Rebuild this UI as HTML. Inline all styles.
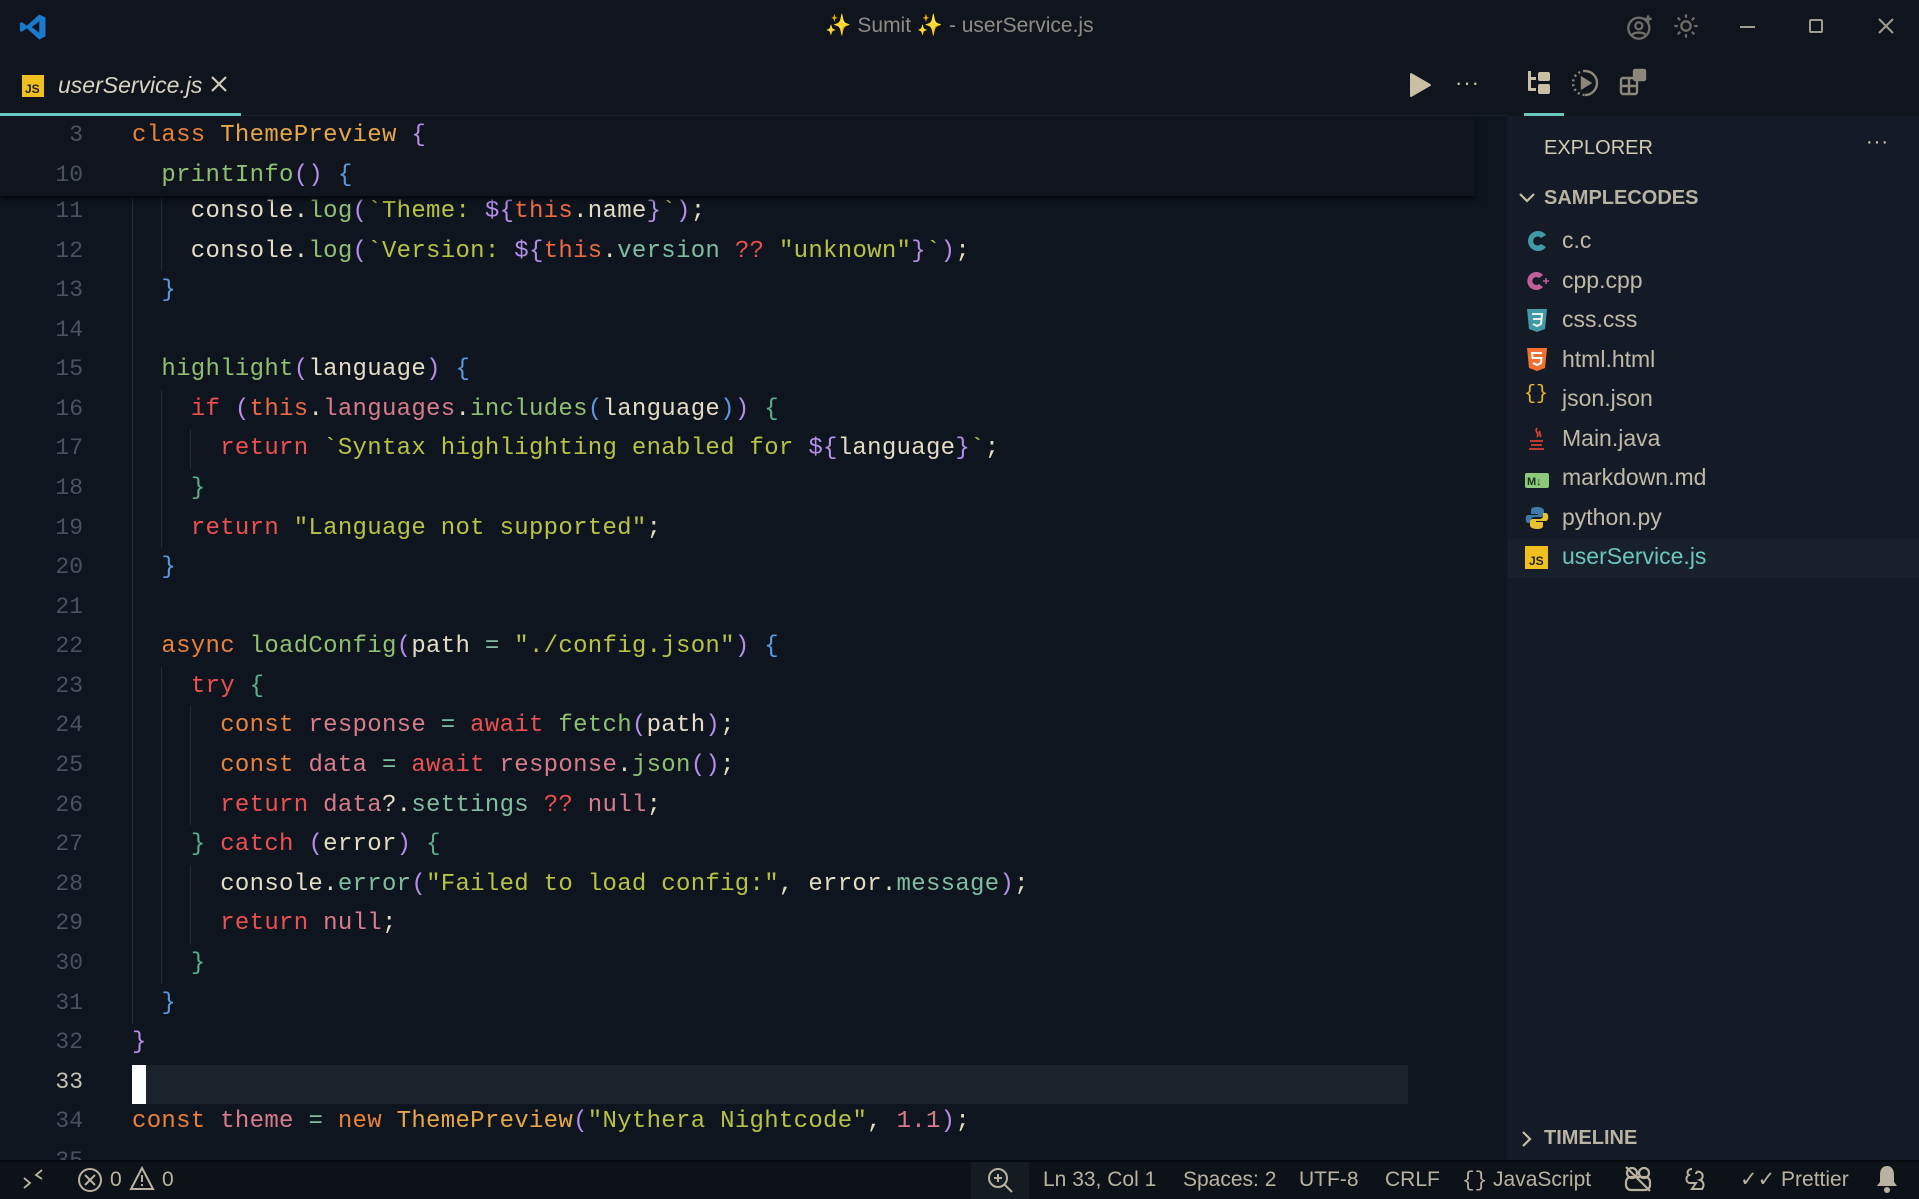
<!DOCTYPE html>
<html><head><meta charset="utf-8">
<style>
*{margin:0;padding:0;box-sizing:border-box}
body{width:1919px;height:1199px;background:#0f151f;overflow:hidden;position:relative;font-family:"Liberation Sans","DejaVu Sans",sans-serif;color:#c8bfa4}
.abs{position:absolute}
#title{left:0;top:0;width:1919px;height:55px;background:#0f141d}
#tabs{left:0;top:55px;width:1507px;height:61px;background:#0f141d;border-bottom:1px solid #1a222c}
#editor{left:0;top:116px;width:1507px;height:1044px;background:#0f151f;overflow:hidden}
#side{left:1507px;top:55px;width:412px;height:1105px;background:#141b26}
#sidetabs{left:1507px;top:55px;width:412px;height:61px;background:#0f141d}
#status{left:0;top:1160px;width:1919px;height:39px;background:#0d1219;border-top:2px solid #070a0e}
.code{font-family:"Liberation Mono","DejaVu Sans Mono",monospace;font-size:24px;letter-spacing:0.3px;white-space:pre;line-height:39.6px;position:absolute;left:132px;color:#e4dcc4}
.ln{font-family:"Liberation Mono",monospace;font-size:23px;position:absolute;left:0;width:83px;text-align:right;line-height:39.6px;color:#4a5260}
.k{color:#e8823a}.r{color:#ec5050}.f{color:#8fc070}.t{color:#e6a847}.s{color:#b8c244}.v{color:#d87c8c}.o{color:#7fbf9f}.pu{color:#b48ee8}.bl{color:#5a9ae0}.gr{color:#5ab08a}.w{color:#e4dcc4}.th{color:#ee6a44}.n{color:#d87c8c}
.guide{position:absolute;width:1px;background:#252c38}
.file{position:absolute;left:1562px;font-size:23px;color:#c0b9a8}
.ico{position:absolute;left:1524px;width:26px;height:26px}
.st{position:absolute;top:1166px;font-size:21px;color:#b9b2a0;line-height:28px}
</style></head><body>
<div id="title" class="abs"></div>
<svg class="abs" style="left:18px;top:12px" width="30" height="30" viewBox="0 0 24 24"><path d="M17 2 L22 4.5 V19.5 L17 22 L7 13 L3 16 L1.5 15 V9 L3 8 L7 11 Z M17 7.5 L11 12 L17 16.5 Z" fill="#1a7acc"/></svg>
<div class="abs" style="left:0;top:14px;width:1919px;text-align:center;font-size:21px;color:#8f8c83"><span style="color:#b8925a">✨</span> Sumit <span style="color:#b8925a">✨</span> - userService.js</div>
<svg class="abs" style="left:1626px;top:13px" width="28" height="28" viewBox="0 0 24 24" fill="none" stroke="#6e6c66" stroke-width="2"><circle cx="11" cy="13" r="9"/><circle cx="11" cy="11" r="3"/><path d="M5 19c2-3 10-3 12 0"/><path d="M19 2v6M16 5h6" /></svg>
<svg class="abs" style="left:1672px;top:12px" width="28" height="28" viewBox="0 0 24 24" fill="none" stroke="#6e6c66" stroke-width="2"><circle cx="12" cy="12" r="4"/><path d="M12 2v3M12 19v3M2 12h3M19 12h3M4.9 4.9l2.1 2.1M17 17l2.1 2.1M4.9 19.1L7 17M17 7l2.1-2.1"/></svg>
<div class="abs" style="left:1740px;top:26px;width:15px;height:2px;background:#a09c92"></div>
<div class="abs" style="left:1809px;top:19px;width:14px;height:14px;border:2px solid #a09c92;border-radius:2px"></div>
<svg class="abs" style="left:1877px;top:17px" width="18" height="18" viewBox="0 0 18 18" stroke="#a09c92" stroke-width="2"><path d="M2 2L16 16M16 2L2 16"/></svg>

<div id="tabs" class="abs"></div>
<div class="abs" style="left:0;top:113px;width:241px;height:3px;background:#6cc6c0"></div>
<div class="abs" style="left:22px;top:75px;width:22px;height:22px;background:#f0c020;font-size:12px;color:#222;font-weight:bold;padding:7px 0 0 3px;line-height:14px">JS</div>
<div class="abs" style="left:58px;top:72px;font-size:23px;font-style:italic;color:#d8d2c2">userService.js</div>
<svg class="abs" style="left:210px;top:75px" width="18" height="18" viewBox="0 0 18 18" stroke="#d0cab8" stroke-width="2.2"><path d="M2 2L16 16M16 2L2 16"/></svg>
<svg class="abs" style="left:1408px;top:72px" width="24" height="26" viewBox="0 0 24 26"><path d="M3 2 L22 13 L3 24 Z" fill="#c8bfa4" stroke="#c8bfa4" stroke-linejoin="round" stroke-width="2"/></svg>
<div class="abs" style="left:1455px;top:70px;font-size:22px;color:#c8bfa4;letter-spacing:1px">···</div>

<div id="editor" class="abs">
<div class="abs" style="left:0;top:0;width:1475px;height:80px;background:#0f141d;box-shadow:0 3px 5px #05080c;z-index:3">
<div class="ln" style="top:0">3</div><div class="code" style="top:0"><span class="k">class</span> <span class="t">ThemePreview</span> <span class="pu">{</span></div>
<div class="ln" style="top:40px">10</div><div class="code" style="top:40px">  <span class="f">printInfo</span><span class="pu">()</span> <span class="bl">{</span></div>
</div>
<div class="guide" style="left:132px;top:80px;height:828px"></div>
<div class="guide" style="left:161px;top:80px;height:75px"></div>
<div class="guide" style="left:161px;top:274px;height:158px"></div>
<div class="guide" style="left:161px;top:551px;height:317px"></div>
<div class="guide" style="left:190px;top:313px;height:40px"></div>
<div class="guide" style="left:190px;top:590px;height:119px"></div>
<div class="guide" style="left:190px;top:749px;height:79px"></div>
<div class="abs" style="left:132px;top:949px;width:1276px;height:39px;background:#1b222c"></div>
<div class="abs" style="left:132px;top:949px;width:14px;height:39px;background:#ffffff"></div>
<div class="ln" style="top:76px">11</div><div class="code" style="top:76px">    console<span class="w">.</span><span class="f">log</span><span class="pu">(</span><span class="s">`Theme: </span><span class="pu">${</span><span class="th">this</span>.name<span class="pu">}</span><span class="s">`</span><span class="pu">)</span>;</div>
<div class="ln" style="top:116px">12</div><div class="code" style="top:116px">    console.<span class="f">log</span><span class="pu">(</span><span class="s">`Version: </span><span class="pu">${</span><span class="th">this</span>.<span class="o">version</span> <span class="r">??</span> <span class="s">"unknown"</span><span class="pu">}</span><span class="s">`</span><span class="pu">)</span>;</div>
<div class="ln" style="top:155px">13</div><div class="code" style="top:155px">  <span class="bl">}</span></div>
<div class="ln" style="top:195px">14</div>
<div class="ln" style="top:234px">15</div><div class="code" style="top:234px">  <span class="f">highlight</span><span class="pu">(</span>language<span class="pu">)</span> <span class="bl">{</span></div>
<div class="ln" style="top:274px">16</div><div class="code" style="top:274px">    <span class="r">if</span> <span class="pu">(</span><span class="th">this</span>.<span class="v">languages</span>.<span class="f">includes</span><span class="bl">(</span>language<span class="bl">)</span><span class="pu">)</span> <span class="gr">{</span></div>
<div class="ln" style="top:313px">17</div><div class="code" style="top:313px">      <span class="r">return</span> <span class="s">`Syntax highlighting enabled for </span><span class="pu">${</span>language<span class="pu">}</span><span class="s">`</span>;</div>
<div class="ln" style="top:353px">18</div><div class="code" style="top:353px">    <span class="gr">}</span></div>
<div class="ln" style="top:393px">19</div><div class="code" style="top:393px">    <span class="r">return</span> <span class="s">"Language not supported"</span>;</div>
<div class="ln" style="top:432px">20</div><div class="code" style="top:432px">  <span class="bl">}</span></div>
<div class="ln" style="top:472px">21</div>
<div class="ln" style="top:511px">22</div><div class="code" style="top:511px">  <span class="k">async</span> <span class="f">loadConfig</span><span class="pu">(</span>path <span class="o">=</span> <span class="s">"./config.json"</span><span class="pu">)</span> <span class="bl">{</span></div>
<div class="ln" style="top:551px">23</div><div class="code" style="top:551px">    <span class="r">try</span> <span class="gr">{</span></div>
<div class="ln" style="top:590px">24</div><div class="code" style="top:590px">      <span class="k">const</span> <span class="v">response</span> <span class="o">=</span> <span class="r">await</span> <span class="f">fetch</span><span class="pu">(</span>path<span class="pu">)</span>;</div>
<div class="ln" style="top:630px">25</div><div class="code" style="top:630px">      <span class="k">const</span> <span class="v">data</span> <span class="o">=</span> <span class="r">await</span> <span class="v">response</span>.<span class="f">json</span><span class="pu">()</span>;</div>
<div class="ln" style="top:670px">26</div><div class="code" style="top:670px">      <span class="r">return</span> <span class="v">data</span>?.<span class="o">settings</span> <span class="r">??</span> <span class="n">null</span>;</div>
<div class="ln" style="top:709px">27</div><div class="code" style="top:709px">    <span class="gr">}</span> <span class="r">catch</span> <span class="pu">(</span>error<span class="pu">)</span> <span class="gr">{</span></div>
<div class="ln" style="top:749px">28</div><div class="code" style="top:749px">      console.<span class="o">error</span><span class="pu">(</span><span class="s">"Failed to load config:"</span>, error.<span class="o">message</span><span class="pu">)</span>;</div>
<div class="ln" style="top:788px">29</div><div class="code" style="top:788px">      <span class="r">return</span> <span class="n">null</span>;</div>
<div class="ln" style="top:828px">30</div><div class="code" style="top:828px">    <span class="gr">}</span></div>
<div class="ln" style="top:868px">31</div><div class="code" style="top:868px">  <span class="bl">}</span></div>
<div class="ln" style="top:907px">32</div><div class="code" style="top:907px"><span class="pu">}</span></div>
<div class="ln" style="top:947px;color:#c8c2b2">33</div>
<div class="ln" style="top:986px">34</div><div class="code" style="top:986px"><span class="k">const</span> <span class="v">theme</span> <span class="o">=</span> <span class="k">new</span> <span class="t">ThemePreview</span><span class="pu">(</span><span class="s">"Nythera Nightcode"</span>, <span class="n">1.1</span><span class="pu">)</span>;</div>
<div class="ln" style="top:1026px">35</div>
</div>

<div id="side" class="abs"></div>
<div id="sidetabs" class="abs"></div>
<svg class="abs" style="left:1525px;top:69px" width="28" height="28" viewBox="0 0 28 28" fill="#c8bfa4"><path d="M3 2h3v6h5v3H6v8h5v3H4a1 1 0 0 1-1-1z"/><rect x="13" y="3" width="12" height="9" rx="2"/><rect x="13" y="15" width="12" height="10" rx="2"/></svg>
<svg class="abs" style="left:1571px;top:69px" width="28" height="28" viewBox="0 0 28 28" fill="none" stroke="#8c877a" stroke-width="2.4"><path d="M14 2a12 12 0 1 1 0 24" /><path d="M14 2a12 12 0 0 0 0 24" stroke-dasharray="2 3"/><path d="M11 9l8 5-8 5z" fill="#8c877a"/></svg>
<svg class="abs" style="left:1619px;top:68px" width="28" height="28" viewBox="0 0 28 28" fill="none" stroke="#8c877a" stroke-width="2.4"><rect x="2" y="10" width="16" height="16" rx="2"/><path d="M10 10v16M2 18h16"/><rect x="15" y="2" width="11" height="10" rx="1" fill="#8c877a"/></svg>
<div class="abs" style="left:1524px;top:113px;width:40px;height:3px;background:#6cc6c0"></div>
<div class="abs" style="left:1544px;top:137px;font-size:20px;color:#d2cab4">EXPLORER</div>
<div class="abs" style="left:1866px;top:131px;font-size:20px;color:#d2cab4;letter-spacing:1px">···</div>
<svg class="abs" style="left:1518px;top:191px" width="18" height="14" viewBox="0 0 18 14" fill="none" stroke="#c8bfa4" stroke-width="2.2"><path d="M2 3l7 7 7-7"/></svg>
<div class="abs" style="left:1544px;top:187px;font-size:20px;font-weight:bold;color:#b9b3a3">SAMPLECODES</div>
<svg class="ico" style="top:228px" viewBox="0 0 26 26"><path d="M22 7A10 10 0 1 0 22 19L17 16A4.5 4.5 0 1 1 17 10Z" fill="#3f9aa6"/></svg>
<div class="file" style="top:227px">c.c</div>
<svg class="ico" style="top:268px" viewBox="0 0 26 26"><path d="M19 7A9 9 0 1 0 19 19L15 16A4 4 0 1 1 15 10Z" fill="#c0609a"/><path d="M19 13h6M22 10v6" stroke="#c0609a" stroke-width="1.5"/></svg>
<div class="file" style="top:267px">cpp.cpp</div>
<svg class="ico" style="top:307px" viewBox="0 0 26 26"><path d="M3 2h20l-2 20-8 3-8-3z" fill="#3f9aa6"/><path d="M8 7h10l-1 10-4 2-4-2" fill="none" stroke="#e8f0e8" stroke-width="2"/><path d="M9 12h8" stroke="#e8f0e8" stroke-width="2"/></svg>
<div class="file" style="top:306px">css.css</div>
<svg class="ico" style="top:346px" viewBox="0 0 26 26"><path d="M3 2h20l-2 20-8 3-8-3z" fill="#f07030"/><path d="M18 7H8l.5 5h9l-.5 5-4 2-4-2" fill="none" stroke="#fff" stroke-width="2"/></svg>
<div class="file" style="top:346px">html.html</div>
<div class="ico" style="top:383px;font-size:20px;color:#e6b830;font-family:'Liberation Mono',monospace">{}</div>
<div class="file" style="top:385px">json.json</div>
<svg class="ico" style="top:426px" viewBox="0 0 26 26" fill="none" stroke="#d84030" stroke-width="1.8"><path d="M13 2c-3 4 3 5 0 9M16 5c-2 3 2 3 0 6"/><path d="M6 15h13M7 19h11M5 23h15"/></svg>
<div class="file" style="top:425px">Main.java</div>
<svg class="ico" style="top:467px" viewBox="0 0 26 26"><rect x="1" y="6" width="24" height="15" rx="2" fill="#8ec87a"/><text x="3" y="18" font-size="11" font-weight="bold" fill="#14301a" font-family="Liberation Sans">M↓</text></svg>
<div class="file" style="top:464px">markdown.md</div>
<svg class="ico" style="top:505px" viewBox="0 0 26 26"><path d="M13 2c-6 0-6 2-6 4v3h7v1H4c-3 0-3 8 0 8h3v-3c0-2 2-3 4-3h6c2 0 3-1 3-3V6c0-2-2-4-7-4z" fill="#3f7aaa"/><path d="M13 24c6 0 6-2 6-4v-3h-7v-1h10c3 0 3-8 0-8h-3v3c0 2-2 3-4 3H9c-2 0-3 1-3 3v3c0 2 2 4 7 4z" fill="#e8c030"/></svg>
<div class="file" style="top:504px">python.py</div>
<div class="abs" style="left:1508px;top:539px;width:411px;height:39px;background:#18202b"></div>
<div class="abs" style="left:1525px;top:546px;width:23px;height:23px;background:#f0c020;font-size:12px;color:#222;font-weight:bold;padding:8px 0 0 4px;line-height:14px">JS</div>
<div class="file" style="top:543px;color:#6cc6c0">userService.js</div>
<svg class="abs" style="left:1520px;top:1129px" width="14" height="20" viewBox="0 0 14 20" fill="none" stroke="#c8bfa4" stroke-width="2.2"><path d="M3 3l7 7-7 7"/></svg>
<div class="abs" style="left:1544px;top:1127px;font-size:20px;font-weight:bold;color:#b9b3a3">TIMELINE</div>

<div id="status" class="abs"></div>
<svg class="abs" style="left:22px;top:1168px" width="22" height="22" viewBox="0 0 22 22" fill="none" stroke="#b9b2a0" stroke-width="1.8"><path d="M2 10l6 5-6 5M20 2l-6 5 6 4"/></svg>
<svg class="abs" style="left:77px;top:1167px" width="26" height="26" viewBox="0 0 26 26" fill="none" stroke="#b9b2a0" stroke-width="2"><circle cx="13" cy="13" r="11"/><path d="M8 8l10 10M18 8L8 18"/></svg>
<div class="st" style="left:110px">0</div>
<svg class="abs" style="left:129px;top:1166px" width="26" height="26" viewBox="0 0 26 26" fill="none" stroke="#b9b2a0" stroke-width="2"><path d="M13 2L24 23H2z"/><path d="M13 9v7M13 18v2"/></svg>
<div class="st" style="left:162px">0</div>
<div class="abs" style="left:971px;top:1162px;width:58px;height:37px;background:#141c22"></div>
<svg class="abs" style="left:986px;top:1166px" width="28" height="28" viewBox="0 0 28 28" fill="none" stroke="#b9b2a0" stroke-width="2"><circle cx="12" cy="12" r="9"/><path d="M18.5 18.5L26 26M8 12h8M12 8v8"/></svg>
<div class="st" style="left:1043px">Ln 33, Col 1</div>
<div class="st" style="left:1183px">Spaces: 2</div>
<div class="st" style="left:1299px">UTF-8</div>
<div class="st" style="left:1385px">CRLF</div>
<div class="st" style="left:1462px"><span style="font-family:'Liberation Mono',monospace">{}</span> JavaScript</div>
<svg class="abs" style="left:1623px;top:1165px" width="30" height="28" viewBox="0 0 30 28" fill="none" stroke="#b9b2a0" stroke-width="2.2"><circle cx="9" cy="8" r="5"/><circle cx="21" cy="8" r="5"/><rect x="3" y="12" width="24" height="13" rx="5"/><path d="M3 2l24 24"/></svg>
<svg class="abs" style="left:1682px;top:1165px" width="28" height="28" viewBox="0 0 28 28" fill="none" stroke="#b9b2a0" stroke-width="2"><path d="M10 4c-4 0-6 4-3 6-4 2-3 8 1 8h6l-4 6h10c3-4 1-8-2-9 3-1 4-6 0-8-2-1-4 0-4 2"/></svg>
<div class="st" style="left:1740px">✓✓ Prettier</div>
<svg class="abs" style="left:1874px;top:1164px" width="26" height="30" viewBox="0 0 26 30" fill="#b9b2a0"><path d="M13 2c-5 0-7 4-7 9v7l-3 4h20l-3-4v-7c0-5-2-9-7-9z"/><circle cx="13" cy="26" r="3"/></svg>
</body></html>
